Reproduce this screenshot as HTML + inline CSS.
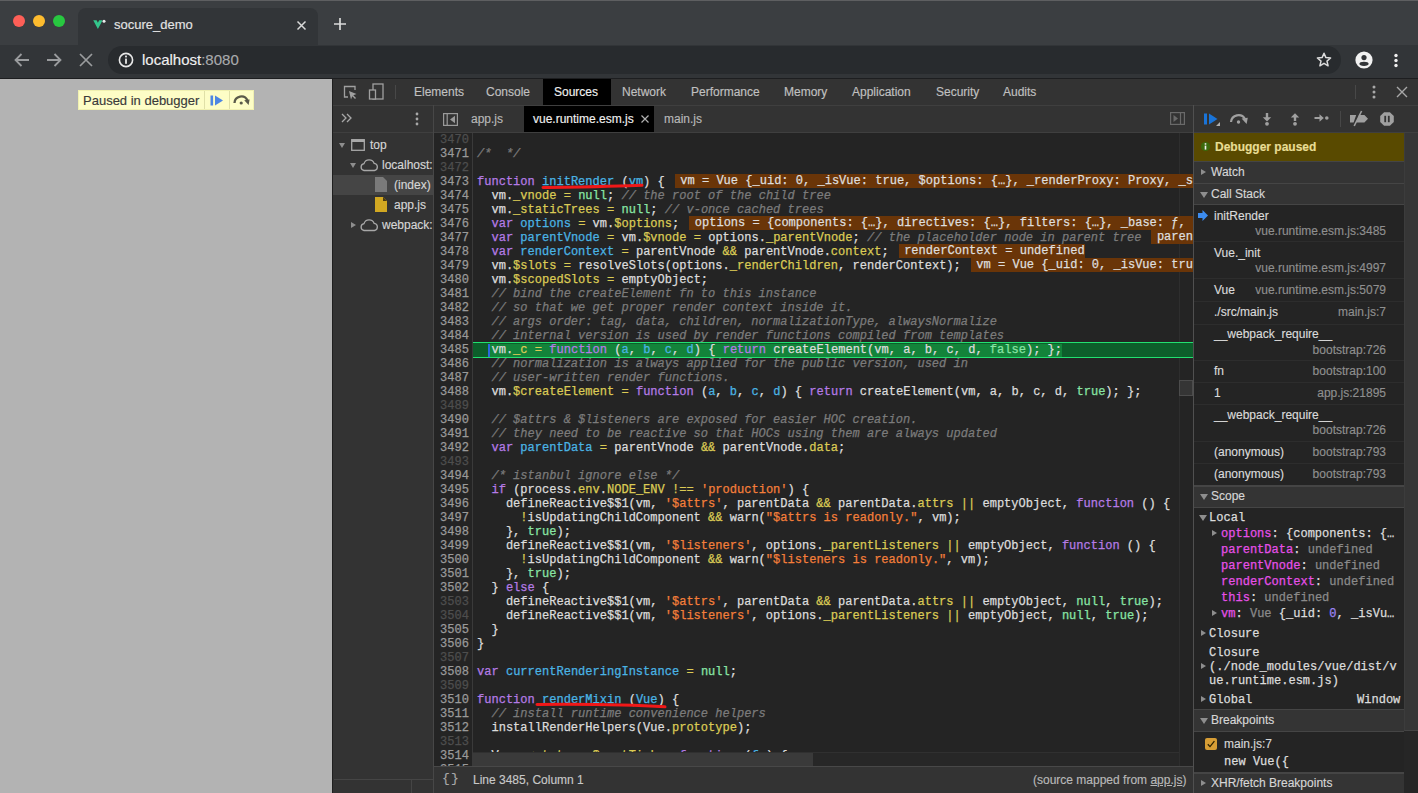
<!DOCTYPE html>
<html><head><meta charset="utf-8">
<style>
*{margin:0;padding:0;box-sizing:border-box}
html,body{width:1418px;height:793px;overflow:hidden;background:#333}
body{position:relative;font-family:"Liberation Sans",sans-serif;font-size:12px;color:#d9d9d9;-webkit-text-stroke:0.15px currentColor}
.abs{position:absolute}
.t{position:absolute;white-space:pre;line-height:14px}
.mono{font-family:"Liberation Mono",monospace}
/* chrome frame */
#titlebar{left:0;top:0;width:1418px;height:46px;background:#3b3e41;border-top:1px solid #5e5f61}
.light{position:absolute;width:12px;height:12px;border-radius:50%}
#tab{left:78px;top:8px;width:240px;height:38px;background:#323538;border-radius:8px 8px 0 0}
#toolbar{left:0;top:45px;width:1418px;height:33px;background:#323538}
#tbline{left:0;top:78px;width:1418px;height:1px;background:#1d1e20}
#omni{left:108px;top:46px;width:1233px;height:28px;background:#282b2e;border-radius:14px}
/* page */
#page{left:0;top:79px;width:332px;height:714px;background:#b3b3b3}
#paused{left:78px;top:90px;width:176px;height:20px;background:#fdfdc6;border:1px solid #f0f0b0}
/* devtools */
#dt{left:332px;top:79px;width:1086px;height:714px;background:#333}
.hline{position:absolute;height:1px}
.vline{position:absolute;width:1px}
.code{font-family:"Liberation Mono",monospace;font-size:12.04px;line-height:14px}
.ln{position:absolute;left:434px;width:35px;text-align:right;font-family:"Liberation Mono",monospace;font-size:12.04px;line-height:14px;color:#9a9a9a;white-space:pre;-webkit-text-stroke:0.25px currentColor}
.ln.dim{color:#4e4e4e}
.cl{position:absolute;left:477px;font-family:"Liberation Mono",monospace;font-size:12.04px;line-height:14px;color:#dcdcdc;white-space:pre;-webkit-text-stroke:0.25px currentColor}
.k{color:#b57be6}
.d{color:#4ab4e4}
.p{color:#dbcb55}
.a{color:#88e4a4}
.c{color:#7b7b7b;font-style:italic}
.s{color:#f47f3a}
.iv{background:#6a3508;color:#dedede;margin-left:10px;padding-left:5.5px;position:relative;top:-1.5px}
.hdr{position:absolute;left:1194px;width:210px;background:#343434;border-bottom:1px solid #454545}
.tri-r{position:absolute;width:0;height:0;border-top:3.5px solid transparent;border-bottom:3.5px solid transparent;border-left:5px solid #8e8e8e}
.tri-d{position:absolute;width:0;height:0;border-left:4px solid transparent;border-right:4px solid transparent;border-top:6px solid #8e8e8e}
.cs{position:absolute;white-space:pre;line-height:14px;font-size:12px}
.cs.n{left:1214px;color:#dadada}
.cs.l{right:32px;color:#8f8f8f;text-align:right}
.sep{position:absolute;left:1194px;width:210px;height:1px;background:#2d2d2d}
.sc{position:absolute;white-space:pre;font-family:"Liberation Mono",monospace;font-size:12.04px;line-height:14px;color:#dcdcdc;-webkit-text-stroke:0.25px currentColor}
.pm{color:#e650e8}
.gr{color:#8a8a8a}
</style></head><body>

<!-- ===== Chrome window frame ===== -->
<div id="titlebar" class="abs"></div>
<div class="light" style="left:13px;top:15px;background:#fe5f57"></div>
<div class="light" style="left:33px;top:15px;background:#febc2e"></div>
<div class="light" style="left:53px;top:15px;background:#28c840"></div>
<div id="tab" class="abs"></div>
<div id="toolbar" class="abs"></div>
<div id="tbline" class="abs"></div>
<div id="omni" class="abs"></div>
<!-- favicon V -->
<svg class="abs" style="left:92px;top:18px" width="14" height="13" viewBox="0 0 14 13"><path d="M1.2 2.2 H4.6 L5.9 4.8 L7.2 2.2 H10.6 L5.9 11 Z" fill="#34c68c"/><circle cx="12" cy="3.3" r="1.5" fill="#ececec"/></svg>
<div class="t" style="left:114px;top:18px;font-size:13px;color:#e3e3e3">socure_demo</div>
<svg class="abs" style="left:296px;top:19.5px" width="11" height="11" viewBox="0 0 11 11"><path d="M1.5 1.5 L9.5 9.5 M9.5 1.5 L1.5 9.5" stroke="#dadada" stroke-width="1.5"/></svg>
<svg class="abs" style="left:333px;top:17px" width="14" height="14" viewBox="0 0 14 14"><path d="M7 1 V13 M1 7 H13" stroke="#dadada" stroke-width="1.7"/></svg>
<!-- nav -->
<svg class="abs" style="left:13px;top:52px" width="18" height="16" viewBox="0 0 18 16"><path d="M16 8 H3 M8.5 2 L2.5 8 L8.5 14" fill="none" stroke="#9a9c9e" stroke-width="1.8"/></svg>
<svg class="abs" style="left:45px;top:52px" width="18" height="16" viewBox="0 0 18 16"><path d="M2 8 H15 M9.5 2 L15.5 8 L9.5 14" fill="none" stroke="#9a9c9e" stroke-width="1.8"/></svg>
<svg class="abs" style="left:79px;top:53px" width="14" height="14" viewBox="0 0 14 14"><path d="M1 1 L13 13 M13 1 L1 13" stroke="#9a9c9e" stroke-width="1.7"/></svg>
<svg class="abs" style="left:118px;top:52px" width="16" height="16" viewBox="0 0 16 16"><circle cx="8" cy="8" r="6.6" fill="none" stroke="#e8e8e8" stroke-width="1.6"/><rect x="7.1" y="6.6" width="1.8" height="5.2" fill="#e8e8e8"/><rect x="7.1" y="3.6" width="1.8" height="1.8" fill="#e8e8e8"/></svg>
<div class="t" style="left:142px;top:52px;font-size:15px;line-height:16px;color:#f0f0f0">localhost<span style="color:#a8aaac">:8080</span></div>
<svg class="abs" style="left:1316px;top:52px" width="16" height="16" viewBox="0 0 16 16"><path d="M8 1.2 L9.9 5.6 L14.6 6 L11 9.1 L12.1 13.8 L8 11.3 L3.9 13.8 L5 9.1 L1.4 6 L6.1 5.6 Z" fill="none" stroke="#dcdcdc" stroke-width="1.5" stroke-linejoin="round"/></svg>
<svg class="abs" style="left:1355px;top:51px" width="18" height="18" viewBox="0 0 18 18"><circle cx="9" cy="9" r="8.6" fill="#f2f2f2"/><circle cx="9" cy="6.6" r="2.6" fill="#323538"/><ellipse cx="9" cy="12.8" rx="4.6" ry="2.1" fill="#323538"/></svg>
<svg class="abs" style="left:1393px;top:53px" width="6" height="16" viewBox="0 0 6 16"><circle cx="3" cy="2.5" r="1.7" fill="#f0f0f0"/><circle cx="3" cy="7.5" r="1.7" fill="#f0f0f0"/><circle cx="3" cy="12.5" r="1.7" fill="#f0f0f0"/></svg>

<!-- ===== Page ===== -->
<div id="page" class="abs"></div>
<div id="paused" class="abs"></div>
<div class="vline" style="left:204px;top:91px;height:18px;background:#e0e0a8"></div>
<div class="vline" style="left:229px;top:91px;height:18px;background:#e0e0a8"></div>
<div class="t" style="left:83px;top:94px;font-size:13px;color:#3a3a3a">Paused in debugger</div>
<svg class="abs" style="left:210px;top:95px" width="14" height="11" viewBox="0 0 14 11"><rect x="0.5" y="0.5" width="2.6" height="10" fill="#4d86e3"/><path d="M5 0.5 L13 5.5 L5 10.5 Z" fill="#4d86e3"/></svg>
<svg class="abs" style="left:232px;top:94px" width="19" height="12" viewBox="0 0 19 12"><path d="M2.5 9 A 6.8 6.8 0 0 1 15.5 6.5" fill="none" stroke="#5a5a4a" stroke-width="2.3"/><path d="M12.2 6.3 L17.6 5.6 L16.6 11 Z" fill="#5a5a4a"/><circle cx="9.2" cy="9" r="1.6" fill="#5a5a4a"/></svg>

<!-- ===== DevTools ===== -->
<div id="dt" class="abs"></div>
<div class="vline" style="left:332px;top:79px;height:714px;background:#1f1f1f"></div>
<!-- main toolbar -->
<div class="hline" style="left:333px;top:105px;width:1085px;background:#3f3f3f"></div>
<svg class="abs" style="left:342px;top:84px" width="16" height="16" viewBox="0 0 16 16"><path d="M6 13 H2.5 V2.5 H13 V6" fill="none" stroke="#a0a0a0" stroke-width="1.3"/><path d="M7 7 L14.5 10 L11.3 11.3 L14 14 L13 15 L10.3 12.3 L9 15.5 Z" fill="#a0a0a0"/></svg>
<svg class="abs" style="left:368px;top:83px" width="17" height="18" viewBox="0 0 17 18"><rect x="5" y="1" width="10" height="15" fill="none" stroke="#a0a0a0" stroke-width="1.3"/><rect x="1.5" y="7" width="6" height="9" fill="#333" stroke="#a0a0a0" stroke-width="1.3"/></svg>
<div class="vline" style="left:395px;top:85px;height:14px;background:#484848"></div>
<div class="abs" style="left:543px;top:79px;width:68px;height:26px;background:#000"></div>
<div class="t" style="left:414px;top:85px;color:#c0c0c0">Elements</div>
<div class="t" style="left:486px;top:85px;color:#c0c0c0">Console</div>
<div class="t" style="left:554px;top:85px;color:#f0f0f0">Sources</div>
<div class="t" style="left:622px;top:85px;color:#c0c0c0">Network</div>
<div class="t" style="left:691px;top:85px;color:#c0c0c0">Performance</div>
<div class="t" style="left:784px;top:85px;color:#c0c0c0">Memory</div>
<div class="t" style="left:852px;top:85px;color:#c0c0c0">Application</div>
<div class="t" style="left:936px;top:85px;color:#c0c0c0">Security</div>
<div class="t" style="left:1003px;top:85px;color:#c0c0c0">Audits</div>
<div class="vline" style="left:1355px;top:85px;height:14px;background:#484848"></div>
<svg class="abs" style="left:1371px;top:85px" width="6" height="14" viewBox="0 0 6 14"><circle cx="3" cy="2" r="1.5" fill="#a8a8a8"/><circle cx="3" cy="7" r="1.5" fill="#a8a8a8"/><circle cx="3" cy="12" r="1.5" fill="#a8a8a8"/></svg>
<svg class="abs" style="left:1396px;top:86px" width="12" height="12" viewBox="0 0 12 12"><path d="M1 1 L11 11 M11 1 L1 11" stroke="#a8a8a8" stroke-width="1.4"/></svg>

<!-- second row: navigator toolbar -->
<div class="hline" style="left:333px;top:132px;width:861px;background:#3f3f3f"></div>
<div class="vline" style="left:433px;top:105px;height:662px;background:#474747"></div>
<svg class="abs" style="left:341px;top:113px" width="11" height="10" viewBox="0 0 11 10"><path d="M1 1 L5 5 L1 9 M6 1 L10 5 L6 9" fill="none" stroke="#a8a8a8" stroke-width="1.3"/></svg>
<svg class="abs" style="left:414px;top:112px" width="6" height="14" viewBox="0 0 6 14"><circle cx="3" cy="2" r="1.4" fill="#a8a8a8"/><circle cx="3" cy="7" r="1.4" fill="#a8a8a8"/><circle cx="3" cy="12" r="1.4" fill="#a8a8a8"/></svg>
<!-- navigator tree -->
<div class="abs" style="left:333px;top:175px;width:100px;height:20px;background:#454545"></div>
<div class="tri-d" style="left:338.5px;top:143px;border-left-width:3.5px;border-right-width:3.5px;border-top-width:5px"></div>
<svg class="abs" style="left:351px;top:139px" width="14" height="12" viewBox="0 0 14 12"><rect x="0.7" y="0.7" width="12.6" height="10.6" fill="none" stroke="#a8a8a8" stroke-width="1.3"/><rect x="0.7" y="0.7" width="12.6" height="2.3" fill="#a8a8a8"/></svg>
<div class="t" style="left:370px;top:138px;color:#d6d6d6">top</div>
<div class="tri-d" style="left:350px;top:163px;border-left-width:3.5px;border-right-width:3.5px;border-top-width:5px"></div>
<svg class="abs" style="left:359px;top:158px" width="20" height="14" viewBox="0 0 20 14"><path d="M5 12.5 H15.5 A3.6 3.6 0 0 0 15.2 5.4 A5.4 5.4 0 0 0 5 5.6 A3.5 3.5 0 0 0 5 12.5 Z" fill="none" stroke="#a8a8a8" stroke-width="1.3"/></svg>
<div class="t" style="left:382px;top:158px;color:#d6d6d6">localhost:</div>
<svg class="abs" style="left:375px;top:177px" width="12" height="15" viewBox="0 0 12 15"><path d="M0 0 H8 L12 4 V15 H0 Z" fill="#7a7a7a"/></svg>
<div class="t" style="left:394px;top:178px;color:#d6d6d6">(index)</div>
<svg class="abs" style="left:375px;top:197px" width="12" height="15" viewBox="0 0 12 15"><path d="M0 0 H8 L12 4 V15 H0 Z" fill="#d2a822"/><path d="M8 0 V4 H12" fill="#4a3a10"/></svg>
<div class="t" style="left:394px;top:198px;color:#d6d6d6">app.js</div>
<div class="tri-r" style="left:351px;top:221.5px"></div>
<svg class="abs" style="left:359px;top:218px" width="20" height="14" viewBox="0 0 20 14"><path d="M5 12.5 H15.5 A3.6 3.6 0 0 0 15.2 5.4 A5.4 5.4 0 0 0 5 5.6 A3.5 3.5 0 0 0 5 12.5 Z" fill="none" stroke="#a8a8a8" stroke-width="1.3"/></svg>
<div class="t" style="left:382px;top:218px;color:#d6d6d6">webpack:</div>

<!-- editor tabs -->
<svg class="abs" style="left:443px;top:113px" width="15" height="13" viewBox="0 0 15 13"><rect x="0.6" y="0.6" width="13.8" height="11.8" fill="none" stroke="#9a9a9a" stroke-width="1.2"/><path d="M4.2 1 V12" stroke="#9a9a9a" stroke-width="1.2"/><path d="M12 2.8 L7 6.5 L12 10.2 Z" fill="#9a9a9a"/></svg>
<div class="t" style="left:471px;top:112px;color:#b8b8b8">app.js</div>
<div class="abs" style="left:524px;top:106px;width:130px;height:26px;background:#000"></div>
<div class="t" style="left:533px;top:112px;color:#f0f0f0">vue.runtime.esm.js</div>
<svg class="abs" style="left:641px;top:115px" width="8" height="8" viewBox="0 0 8 8"><path d="M0.5 0.5 L7.5 7.5 M7.5 0.5 L0.5 7.5" stroke="#b0b0b0" stroke-width="1.2"/></svg>
<div class="t" style="left:664px;top:112px;color:#b8b8b8">main.js</div>
<svg class="abs" style="left:1170px;top:112px" width="15" height="13" viewBox="0 0 15 13"><rect x="0.6" y="0.6" width="13.8" height="11.8" fill="none" stroke="#6a6a6a" stroke-width="1.2"/><path d="M10.5 1 V12" stroke="#6a6a6a" stroke-width="1.2"/><path d="M3.5 3 L8 6.5 L3.5 10 Z" fill="#6a6a6a"/></svg>

<!-- editor -->
<div class="abs" style="left:434px;top:133px;width:760px;height:634px;background:#242424;overflow:hidden">
</div>
<div class="vline" style="left:472px;top:133px;height:634px;background:#3a3a3a"></div>
<div class="vline" style="left:1179px;top:133px;height:633px;background:#2e2e2e"></div>
<!-- exec line -->
<div class="abs" style="left:473px;top:342px;width:721px;height:16px;background:#0d5e2b;border-top:1.5px solid #22e070;border-bottom:1.5px solid #22e070"></div>
<div class="abs" style="left:490px;top:343.5px;width:572px;height:13px;background:#13833a"></div>
<div class="vline" style="left:488px;top:343.5px;height:13px;width:1.5px;background:#2a6adf"></div>
<div class="abs" style="left:434px;top:133px;width:759px;height:633px;overflow:hidden">
<div class="abs" style="left:-434px;top:-133px;width:1418px;height:793px">
<div class="ln dim" style="top:133px">3470</div>
<div class="cl" style="top:133px"></div>
<div class="ln" style="top:147px">3471</div>
<div class="cl" style="top:147px"><span class="c">/*  */</span></div>
<div class="ln dim" style="top:161px">3472</div>
<div class="cl" style="top:161px"></div>
<div class="ln" style="top:175px">3473</div>
<div class="cl" style="top:175px"><span class="k">function</span> <span class="d">initRender</span> (<span class="d">vm</span>) {<span class="iv">vm = Vue {_uid: 0, _isVue: true, $options: {…}, _renderProxy: Proxy, _self: Vue, …}</span></div>
<div class="ln" style="top:189px">3474</div>
<div class="cl" style="top:189px">  vm.<span class="p">_vnode</span> <span class="p">=</span> <span class="a">null</span>; <span class="c">// the root of the child tree</span></div>
<div class="ln" style="top:203px">3475</div>
<div class="cl" style="top:203px">  vm.<span class="p">_staticTrees</span> <span class="p">=</span> <span class="a">null</span>; <span class="c">// v-once cached trees</span></div>
<div class="ln" style="top:217px">3476</div>
<div class="cl" style="top:217px">  <span class="k">var</span> <span class="d">options</span> <span class="p">=</span> vm.<span class="p">$options</span>;<span class="iv">options = {components: {…}, directives: {…}, filters: {…}, _base: ƒ, el: &quot;#app&quot;, …}</span></div>
<div class="ln" style="top:231px">3477</div>
<div class="cl" style="top:231px">  <span class="k">var</span> <span class="d">parentVnode</span> <span class="p">=</span> vm.<span class="p">$vnode</span> <span class="p">=</span> options.<span class="p">_parentVnode</span>; <span class="c">// the placeholder node in parent tree</span><span class="iv">parentVnode = undefined</span></div>
<div class="ln" style="top:245px">3478</div>
<div class="cl" style="top:245px">  <span class="k">var</span> <span class="d">renderContext</span> <span class="p">=</span> parentVnode <span class="p">&amp;&amp;</span> parentVnode.<span class="p">context</span>;<span class="iv">renderContext = undefined</span></div>
<div class="ln" style="top:259px">3479</div>
<div class="cl" style="top:259px">  vm.<span class="p">$slots</span> <span class="p">=</span> resolveSlots(options.<span class="p">_renderChildren</span>, renderContext);<span class="iv">vm = Vue {_uid: 0, _isVue: true, $options: {…}, _renderProxy: Proxy, _self: Vue, …}</span></div>
<div class="ln" style="top:273px">3480</div>
<div class="cl" style="top:273px">  vm.<span class="p">$scopedSlots</span> <span class="p">=</span> emptyObject;</div>
<div class="ln" style="top:287px">3481</div>
<div class="cl" style="top:287px">  <span class="c">// bind the createElement fn to this instance</span></div>
<div class="ln" style="top:301px">3482</div>
<div class="cl" style="top:301px">  <span class="c">// so that we get proper render context inside it.</span></div>
<div class="ln" style="top:315px">3483</div>
<div class="cl" style="top:315px">  <span class="c">// args order: tag, data, children, normalizationType, alwaysNormalize</span></div>
<div class="ln" style="top:329px">3484</div>
<div class="cl" style="top:329px">  <span class="c">// internal version is used by render functions compiled from templates</span></div>
<div class="ln" style="top:343px">3485</div>
<div class="cl" style="top:343px">  vm.<span class="p">_c</span> <span class="p">=</span> <span class="k">function</span> (<span class="d">a</span>, <span class="d">b</span>, <span class="d">c</span>, <span class="d">d</span>) { <span class="k">return</span> createElement(vm, a, b, c, d, <span class="a">false</span>); };</div>
<div class="ln" style="top:357px">3486</div>
<div class="cl" style="top:357px">  <span class="c">// normalization is always applied for the public version, used in</span></div>
<div class="ln" style="top:371px">3487</div>
<div class="cl" style="top:371px">  <span class="c">// user-written render functions.</span></div>
<div class="ln" style="top:385px">3488</div>
<div class="cl" style="top:385px">  vm.<span class="p">$createElement</span> <span class="p">=</span> <span class="k">function</span> (<span class="d">a</span>, <span class="d">b</span>, <span class="d">c</span>, <span class="d">d</span>) { <span class="k">return</span> createElement(vm, a, b, c, d, <span class="a">true</span>); };</div>
<div class="ln dim" style="top:399px">3489</div>
<div class="cl" style="top:399px"></div>
<div class="ln" style="top:413px">3490</div>
<div class="cl" style="top:413px">  <span class="c">// $attrs &amp; $listeners are exposed for easier HOC creation.</span></div>
<div class="ln" style="top:427px">3491</div>
<div class="cl" style="top:427px">  <span class="c">// they need to be reactive so that HOCs using them are always updated</span></div>
<div class="ln" style="top:441px">3492</div>
<div class="cl" style="top:441px">  <span class="k">var</span> <span class="d">parentData</span> <span class="p">=</span> parentVnode <span class="p">&amp;&amp;</span> parentVnode.<span class="p">data</span>;</div>
<div class="ln dim" style="top:455px">3493</div>
<div class="cl" style="top:455px"></div>
<div class="ln" style="top:469px">3494</div>
<div class="cl" style="top:469px">  <span class="c">/* istanbul ignore else */</span></div>
<div class="ln" style="top:483px">3495</div>
<div class="cl" style="top:483px">  <span class="k">if</span> (process.<span class="p">env</span>.<span class="p">NODE_ENV</span> <span class="p">!==</span> <span class="s">&#x27;production&#x27;</span>) {</div>
<div class="ln" style="top:497px">3496</div>
<div class="cl" style="top:497px">    defineReactive$$1(vm, <span class="s">&#x27;$attrs&#x27;</span>, parentData <span class="p">&amp;&amp;</span> parentData.<span class="p">attrs</span> <span class="p">||</span> emptyObject, <span class="k">function</span> () {</div>
<div class="ln" style="top:511px">3497</div>
<div class="cl" style="top:511px">      <span class="p">!</span>isUpdatingChildComponent <span class="p">&amp;&amp;</span> warn(<span class="s">&quot;$attrs is readonly.&quot;</span>, vm);</div>
<div class="ln" style="top:525px">3498</div>
<div class="cl" style="top:525px">    }, <span class="a">true</span>);</div>
<div class="ln" style="top:539px">3499</div>
<div class="cl" style="top:539px">    defineReactive$$1(vm, <span class="s">&#x27;$listeners&#x27;</span>, options.<span class="p">_parentListeners</span> <span class="p">||</span> emptyObject, <span class="k">function</span> () {</div>
<div class="ln" style="top:553px">3500</div>
<div class="cl" style="top:553px">      <span class="p">!</span>isUpdatingChildComponent <span class="p">&amp;&amp;</span> warn(<span class="s">&quot;$listeners is readonly.&quot;</span>, vm);</div>
<div class="ln" style="top:567px">3501</div>
<div class="cl" style="top:567px">    }, <span class="a">true</span>);</div>
<div class="ln" style="top:581px">3502</div>
<div class="cl" style="top:581px">  } <span class="k">else</span> {</div>
<div class="ln dim" style="top:595px">3503</div>
<div class="cl" style="top:595px">    defineReactive$$1(vm, <span class="s">&#x27;$attrs&#x27;</span>, parentData <span class="p">&amp;&amp;</span> parentData.<span class="p">attrs</span> <span class="p">||</span> emptyObject, <span class="a">null</span>, <span class="a">true</span>);</div>
<div class="ln dim" style="top:609px">3504</div>
<div class="cl" style="top:609px">    defineReactive$$1(vm, <span class="s">&#x27;$listeners&#x27;</span>, options.<span class="p">_parentListeners</span> <span class="p">||</span> emptyObject, <span class="a">null</span>, <span class="a">true</span>);</div>
<div class="ln" style="top:623px">3505</div>
<div class="cl" style="top:623px">  }</div>
<div class="ln" style="top:637px">3506</div>
<div class="cl" style="top:637px">}</div>
<div class="ln dim" style="top:651px">3507</div>
<div class="cl" style="top:651px"></div>
<div class="ln" style="top:665px">3508</div>
<div class="cl" style="top:665px"><span class="k">var</span> <span class="d">currentRenderingInstance</span> <span class="p">=</span> <span class="a">null</span>;</div>
<div class="ln dim" style="top:679px">3509</div>
<div class="cl" style="top:679px"></div>
<div class="ln" style="top:693px">3510</div>
<div class="cl" style="top:693px"><span class="k">function</span> <span class="d">renderMixin</span> (<span class="d">Vue</span>) {</div>
<div class="ln" style="top:707px">3511</div>
<div class="cl" style="top:707px">  <span class="c">// install runtime convenience helpers</span></div>
<div class="ln" style="top:721px">3512</div>
<div class="cl" style="top:721px">  installRenderHelpers(Vue.<span class="p">prototype</span>);</div>
<div class="ln dim" style="top:735px">3513</div>
<div class="cl" style="top:735px"></div>
<div class="ln" style="top:749px">3514</div>
<div class="cl" style="top:749px">  Vue.<span class="p">prototype</span>.<span class="p">$nextTick</span> <span class="p">=</span> <span class="k">function</span> (<span class="d">fn</span>) {</div>
<div class="ln" style="top:763px">3515</div>
<div class="cl" style="top:763px">    <span class="k">return</span> nextTick(fn, this)</div>
</div>
</div>
<!-- red annotations -->
<svg class="abs" style="left:530px;top:175px" width="150" height="20" viewBox="0 0 150 20"><path d="M13 12.5 C 50 12, 90 11.5, 112 10.3" fill="none" stroke="#f01818" stroke-width="3" stroke-linecap="round"/></svg>
<svg class="abs" style="left:530px;top:695px" width="150" height="20" viewBox="0 0 150 20"><path d="M7 9.4 C 50 9, 100 9.5, 135 11.8" fill="none" stroke="#f01818" stroke-width="3" stroke-linecap="round"/></svg>
<!-- editor scrollbars -->
<div class="abs" style="left:1179px;top:380px;width:14px;height:16px;background:#353535;border:1px solid #4c4c4c"></div>
<div class="abs" style="left:473px;top:752px;width:706px;height:14px;background:#272727;border-top:1px solid #303030"></div>
<div class="abs" style="left:473px;top:753px;width:340px;height:13px;background:#3a3a3a"></div>
<!-- status bar -->
<div class="hline" style="left:434px;top:766px;width:760px;background:#484848"></div>
<div class="abs" style="left:434px;top:767px;width:760px;height:26px;background:#333"></div>
<div class="t mono" style="left:442px;top:772px;font-size:13px;color:#a8a8a8">{</div><div class="t mono" style="left:451px;top:772px;font-size:13px;color:#a8a8a8">}</div>
<div class="t" style="left:473px;top:773px;color:#c8c8c8">Line 3485, Column 1</div>
<div class="t" style="left:1033px;top:773px;color:#b8b8b8">(source mapped from <span style="text-decoration:underline">app.js</span>)</div>
<div class="vline" style="left:433px;top:767px;height:26px;background:#474747"></div>
<div class="abs" style="left:333px;top:767px;width:100px;height:26px;background:#333"></div>
<div class="hline" style="left:334px;top:779px;width:99px;background:#454545"></div>
<div class="vline" style="left:411px;top:779px;height:14px;background:#454545"></div>

<!-- ===== right sidebar ===== -->
<div class="vline" style="left:1193px;top:105px;height:688px;background:#505050"></div>
<svg class="abs" style="left:1203.7px;top:113.3px" width="16" height="13" viewBox="0 0 16 13"><rect x="0" y="0.5" width="3" height="11" fill="#1a74d8"/><path d="M5 0.5 L13.5 6 L5 11.5 Z" fill="#1a74d8"/><path d="M16 9 V13 H12 Z" fill="#b0b0b0"/></svg>
<svg class="abs" style="left:1229px;top:113px" width="20" height="11" viewBox="0 0 20 11"><path d="M2 9 A 7.5 7.5 0 0 1 16 6" fill="none" stroke="#a0a0a0" stroke-width="2.2"/><path d="M12.6 5.6 L18.8 4.8 L17.6 11 Z" fill="#a0a0a0"/><circle cx="9.5" cy="9" r="1.7" fill="#a0a0a0"/></svg>
<svg class="abs" style="left:1261.5px;top:113px" width="10" height="14" viewBox="0 0 10 14"><path d="M5 0 V5" stroke="#a0a0a0" stroke-width="2.4"/><path d="M0.8 4.2 L9.2 4.2 L5 8.4 Z" fill="#a0a0a0"/><circle cx="5" cy="10.8" r="1.9" fill="#a0a0a0"/></svg>
<svg class="abs" style="left:1289.5px;top:113px" width="10" height="14" viewBox="0 0 10 14"><path d="M5 3.5 V8" stroke="#a0a0a0" stroke-width="2.4"/><path d="M0.8 4.4 L9.2 4.4 L5 0.2 Z" fill="#a0a0a0"/><circle cx="5" cy="10.8" r="1.9" fill="#a0a0a0"/></svg>
<svg class="abs" style="left:1314px;top:113px" width="15" height="10" viewBox="0 0 15 10"><path d="M0.5 5 H7" stroke="#a0a0a0" stroke-width="2"/><path d="M5.5 1.2 L9.8 5 L5.5 8.8 Z" fill="#a0a0a0"/><circle cx="12.8" cy="5" r="1.8" fill="#a0a0a0"/></svg>
<div class="vline" style="left:1340px;top:111px;height:16px;background:#474747"></div>
<svg class="abs" style="left:1349px;top:110px" width="20" height="17" viewBox="0 0 20 17"><path d="M1 5 H7.2 L4.6 12.6 H1 Z M10 5 H15.4 L19 8.8 L15.4 12.6 H7.4 Z" fill="#a0a0a0"/><path d="M12.6 1 L5.2 16" stroke="#a0a0a0" stroke-width="1.6"/></svg>
<svg class="abs" style="left:1380px;top:112px" width="14" height="14" viewBox="0 0 14 14"><path d="M4.1 0.2 H9.9 L13.8 4.1 V9.9 L9.9 13.8 H4.1 L0.2 9.9 V4.1 Z" fill="#a0a0a0"/><rect x="4.3" y="3.8" width="1.8" height="6.4" fill="#333"/><rect x="7.9" y="3.8" width="1.8" height="6.4" fill="#333"/></svg>
<div class="hline" style="left:1194px;top:132px;width:224px;background:#3f3f3f"></div>

<!-- sidebar content -->
<div class="abs" style="left:1194px;top:133px;width:210px;height:660px;background:#242424"></div>
<div class="abs" style="left:1404px;top:133px;width:14px;height:660px;background:#262626"></div>
<div class="abs" style="left:1404px;top:133px;width:14px;height:598px;background:#363636;border-left:1px solid #3c3c3c;border-bottom:1px solid #444"></div>
<div class="abs" style="left:1194px;top:133px;width:210px;height:28px;background:#594a00"></div>
<svg class="abs" style="left:1200px;top:141px" width="11" height="11" viewBox="0 0 11 11"><circle cx="5.5" cy="5.5" r="4.6" fill="#3c6a0c"/><rect x="4.7" y="4.6" width="1.6" height="4" fill="#f0f0f0"/><rect x="4.7" y="2.2" width="1.6" height="1.5" fill="#f0f0f0"/></svg>
<div class="t" style="left:1215px;top:140px;font-weight:bold;color:#e8dd94">Debugger paused</div>
<div class="hdr" style="top:161px;height:23px;border-top:1px solid #454545"></div>
<div class="tri-r" style="left:1201px;top:169px"></div>
<div class="t" style="left:1211px;top:165px;color:#d6d6d6">Watch</div>
<div class="hdr" style="top:184px;height:21px"></div>
<div class="tri-d" style="left:1200px;top:192px"></div>
<div class="t" style="left:1211px;top:187px;color:#d6d6d6">Call Stack</div>

<!-- call stack -->
<svg class="abs" style="left:1198px;top:210px" width="10" height="11" viewBox="0 0 10 11"><path d="M0 3 H4.5 V0 L10 5.5 L4.5 11 V8 H0 Z" fill="#3c8cf0"/></svg>
<div class="cs n" style="top:209px">initRender</div>
<div class="cs l" style="top:224px">vue.runtime.esm.js:3485</div>
<div class="sep" style="top:241px"></div>
<div class="cs n" style="top:246px">Vue._init</div>
<div class="cs l" style="top:261px">vue.runtime.esm.js:4997</div>
<div class="sep" style="top:278px"></div>
<div class="cs n" style="top:283px">Vue</div>
<div class="cs l" style="top:283px">vue.runtime.esm.js:5079</div>
<div class="sep" style="top:301px"></div>
<div class="cs n" style="top:305px">./src/main.js</div>
<div class="cs l" style="top:305px">main.js:7</div>
<div class="sep" style="top:324px"></div>
<div class="cs n" style="top:327px">__webpack_require__</div>
<div class="cs l" style="top:343px">bootstrap:726</div>
<div class="sep" style="top:360px"></div>
<div class="cs n" style="top:364px">fn</div>
<div class="cs l" style="top:364px">bootstrap:100</div>
<div class="sep" style="top:382px"></div>
<div class="cs n" style="top:386px">1</div>
<div class="cs l" style="top:386px">app.js:21895</div>
<div class="sep" style="top:404px"></div>
<div class="cs n" style="top:408px">__webpack_require__</div>
<div class="cs l" style="top:423px">bootstrap:726</div>
<div class="sep" style="top:441px"></div>
<div class="cs n" style="top:445px">(anonymous)</div>
<div class="cs l" style="top:445px">bootstrap:793</div>
<div class="sep" style="top:463px"></div>
<div class="cs n" style="top:467px">(anonymous)</div>
<div class="cs l" style="top:467px">bootstrap:793</div>

<div class="hdr" style="top:485px;height:23px;border-top:2px solid #454545"></div>
<div class="tri-d" style="left:1200px;top:494px"></div>
<div class="t" style="left:1211px;top:489px;color:#d6d6d6">Scope</div>

<!-- scope -->
<div class="tri-d" style="left:1199px;top:515px"></div>
<div class="sc" style="left:1209px;top:511px">Local</div>
<div class="tri-r" style="left:1212px;top:530px"></div>
<div class="sc" style="left:1221px;top:527px"><span class="pm">options</span>: {components: {…</div>
<div class="sc" style="left:1221px;top:543px"><span class="pm">parentData</span>: <span class="gr">undefined</span></div>
<div class="sc" style="left:1221px;top:559px"><span class="pm">parentVnode</span>: <span class="gr">undefined</span></div>
<div class="sc" style="left:1221px;top:575px"><span class="pm">renderContext</span>: <span class="gr">undefined</span></div>
<div class="sc" style="left:1221px;top:591px"><span class="pm">this</span>: <span class="gr">undefined</span></div>
<div class="tri-r" style="left:1212px;top:610px"></div>
<div class="sc" style="left:1221px;top:607px"><span class="pm">vm</span>: <span class="gr">Vue</span> {_uid: <span style="color:#9b84f4">0</span>, _isVu…</div>
<div class="tri-r" style="left:1200.5px;top:630px"></div>
<div class="sc" style="left:1209px;top:627px">Closure</div>
<div class="sc" style="left:1209px;top:646px">Closure</div>
<div class="tri-r" style="left:1200.5px;top:663px"></div>
<div class="sc" style="left:1209px;top:660px">(./node_modules/vue/dist/v</div>
<div class="sc" style="left:1209px;top:674px">ue.runtime.esm.js)</div>
<div class="tri-r" style="left:1200.5px;top:695.5px"></div>
<div class="sc" style="left:1209px;top:693px">Global</div>
<div class="sc" style="left:1357px;top:693px">Window</div>

<div class="hdr" style="top:709px;height:23px;border-top:1px solid #454545"></div>
<div class="tri-d" style="left:1200px;top:718px"></div>
<div class="t" style="left:1211px;top:713px;color:#d6d6d6">Breakpoints</div>
<div class="abs" style="left:1205px;top:738px;width:12px;height:12px;background:#d69d35;border-radius:2px"></div>
<svg class="abs" style="left:1205px;top:738px" width="12" height="12" viewBox="0 0 12 12"><path d="M2.8 6.2 L5 8.6 L9.4 3.2" fill="none" stroke="#2a2000" stroke-width="1.3"/></svg>
<div class="t" style="left:1224px;top:737px;color:#d6d6d6">main.js:7</div>
<div class="sc" style="left:1224px;top:755px">new Vue({</div>
<div class="hdr" style="top:772px;height:22px;border-top:2px solid #454545"></div>
<div class="tri-r" style="left:1200.5px;top:780px"></div>
<div class="t" style="left:1211px;top:776px;color:#d6d6d6">XHR/fetch Breakpoints</div>

</body></html>
